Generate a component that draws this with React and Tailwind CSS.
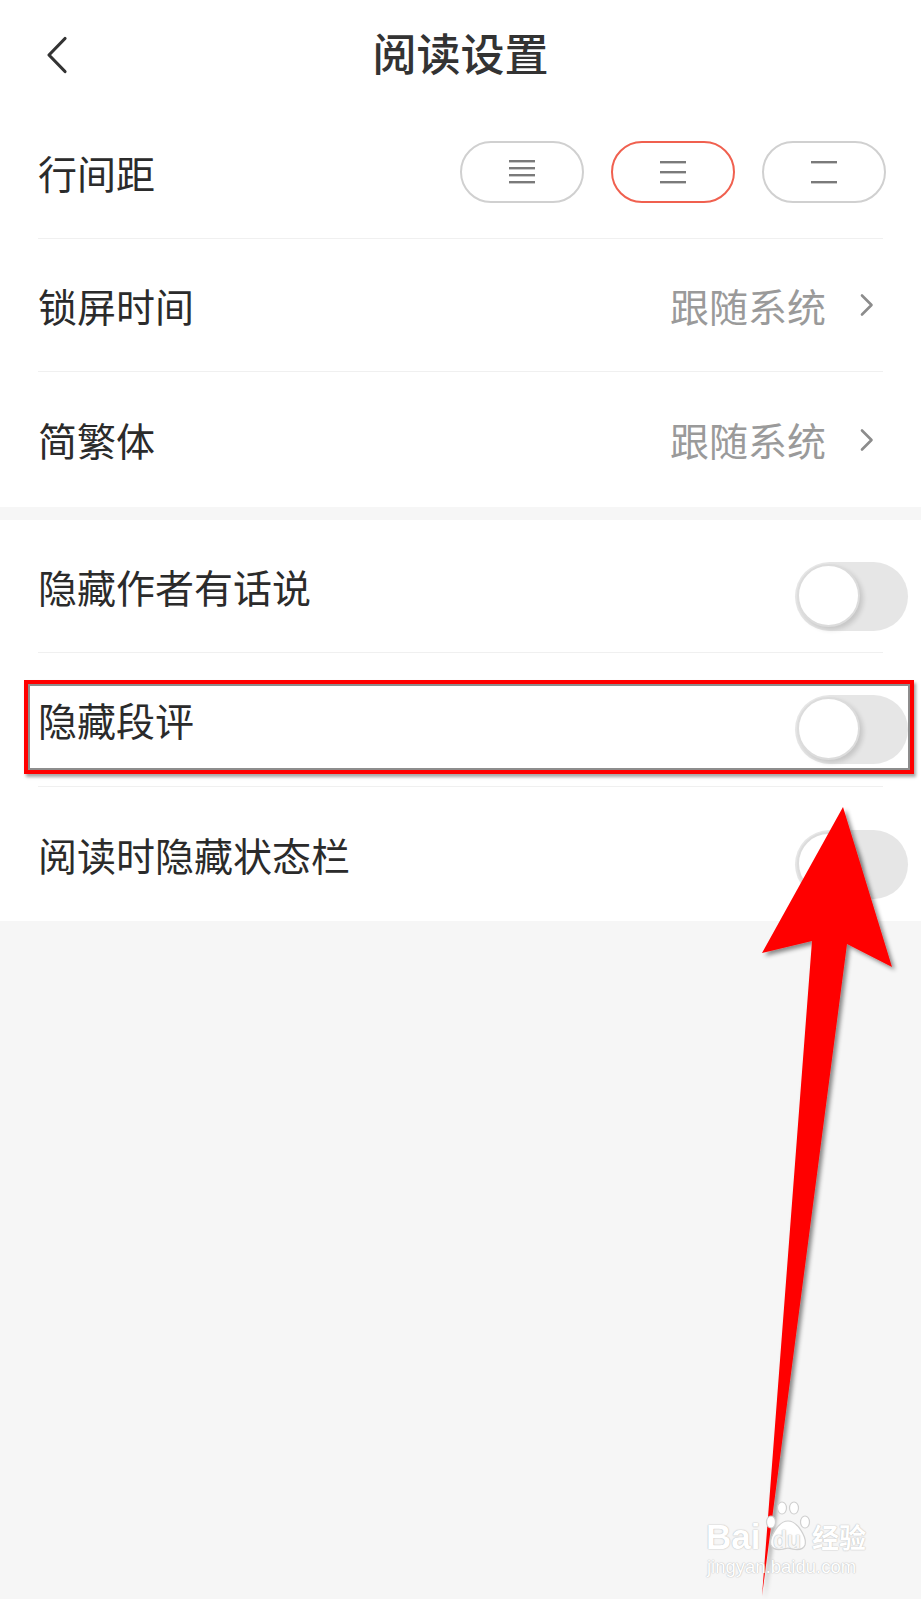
import React from "react";

function LinesIcon({ ys }) {
  return (
    <svg width="26" height="24" viewBox="0 0 26 24" className="block">
      {ys.map((y) => (
        <rect key={y} x="0" y={y} width="26" height="2.4" fill="#7a7a7a" />
      ))}
    </svg>
  );
}

function SpacingButton({ ys, active }) {
  return (
    <div
      className={
        active
          ? "w-[124px] h-[62px] rounded-full border-2 border-[#f0604f] flex items-center justify-center bg-white"
          : "w-[124px] h-[62px] rounded-full border-2 border-[#d0d0d0] flex items-center justify-center bg-white"
      }
    >
      <LinesIcon ys={ys} />
    </div>
  );
}

function Chevron() {
  return (
    <svg width="16" height="24" viewBox="0 0 16 24" className="block">
      <path d="M3 2.5 L12.5 12 L3 21.5" fill="none" stroke="#8c8c8c" strokeWidth="2.6" strokeLinecap="round" strokeLinejoin="round" />
    </svg>
  );
}

function Toggle() {
  return (
    <div className="relative w-[113px] h-[69px] rounded-full bg-[#e6e6e6] mt-[20px] -mr-[25px] shrink-0">
      <div className="absolute left-[2px] top-[2px] w-[63px] h-[63px] rounded-full bg-white border-2 border-[#dcdcdc] shadow-[3px_3px_5px_rgba(0,0,0,0.14)]" />
    </div>
  );
}

function Row({ h, border, children }) {
  return (
    <div
      className={
        border
          ? "mx-[38px] flex items-center justify-between border-b border-[#f0f0f0] " + h
          : "mx-[38px] flex items-center justify-between " + h
      }
    >
      {children}
    </div>
  );
}

function ValueRight() {
  return (
    <div className="flex items-center gap-[33px] mr-[8px]">
      <span className="text-[39px] leading-none text-[#9a9a9a]">跟随系统</span>
      <Chevron />
    </div>
  );
}

export default function App() {
  const font = "font-['Noto_Sans_CJK_SC','Noto_Sans',sans-serif]";
  const wm = "[text-shadow:0_0_1.5px_#b8b8b8,0_0_1px_#cccccc]";
  return (
    <div className={"relative w-full min-h-[1599px] bg-[#f6f6f6] overflow-hidden " + font}>
      {/* top white block */}
      <div className="bg-white">
        <div className="relative h-[106px] flex items-center justify-center">
          <div className="absolute left-[45px] top-[36px]">
            <svg width="24" height="38" viewBox="0 0 24 38" className="block">
              <path d="M20 2.5 L4 19 L20 35.5" fill="none" stroke="#333333" strokeWidth="3.2" strokeLinecap="round" strokeLinejoin="round" />
            </svg>
          </div>
          <span className="text-[44px] leading-none font-medium text-[#333333] -mt-[2px]">阅读设置</span>
        </div>

        <Row h="h-[133px]" border>
          <span className="text-[39px] leading-none text-[#2b2b2b]">行间距</span>
          <div className="flex items-center gap-[27px] -mr-[3px]">
            <SpacingButton ys={[0, 7, 14, 21]} />
            <SpacingButton ys={[1, 11, 21]} active />
            <SpacingButton ys={[1, 21]} />
          </div>
        </Row>

        <Row h="h-[133px]" border>
          <span className="text-[39px] leading-none text-[#2b2b2b]">锁屏时间</span>
          <ValueRight />
        </Row>

        <Row h="h-[135px]">
          <span className="text-[39px] leading-none text-[#2b2b2b]">简繁体</span>
          <ValueRight />
        </Row>
      </div>

      <div className="h-[13px]" />

      {/* second white block */}
      <div className="bg-white">
        <Row h="h-[133px]" border>
          <span className="text-[39px] leading-none text-[#2b2b2b]">隐藏作者有话说</span>
          <Toggle />
        </Row>
        <Row h="h-[134px]" border>
          <span className="text-[39px] leading-none text-[#2b2b2b]">隐藏段评</span>
          <Toggle />
        </Row>
        <Row h="h-[134px]">
          <span className="text-[39px] leading-none text-[#2b2b2b]">阅读时隐藏状态栏</span>
          <Toggle />
        </Row>
      </div>

      {/* red highlight box */}
      <div className="absolute left-[24px] top-[680px] w-[890px] h-[94px] border-4 border-[#ff0000] shadow-[inset_0_0_0_2px_#8d8d8d,2px_3px_3px_rgba(0,0,0,0.35)]" />

      {/* red arrow */}
      <svg className="absolute left-0 top-0" width="921" height="1599" viewBox="0 0 921 1599">
        <defs>
          <filter id="ash" x="-20%" y="-5%" width="140%" height="110%">
            <feDropShadow dx="3" dy="3" stdDeviation="2" floodColor="#000" floodOpacity="0.45" />
          </filter>
        </defs>
        <polygon
          points="843,807 892,967 847,944 762,1596 812,941 762,953"
          fill="#ff0000"
          filter="url(#ash)"
        />
      </svg>

      {/* baidu watermark */}
      <div className="absolute left-[700px] top-[1498px] w-[180px] h-[84px]">
        <svg className="absolute left-[64px] top-[2px]" width="48" height="52" viewBox="0 0 48 52">
          <g fill="#ffffff" stroke="#d0d0d0" strokeWidth="1.2">
            <ellipse cx="7" cy="22" rx="4.5" ry="6" />
            <ellipse cx="18" cy="8" rx="4.5" ry="6" />
            <ellipse cx="30" cy="8" rx="4.5" ry="6" />
            <ellipse cx="41" cy="22" rx="4.5" ry="6" />
            <path d="M24 21 C14 21 5 38 7 45 C9 51 17 50 24 48 C31 50 39 51 41 45 C43 38 34 21 24 21 Z" />
          </g>
        </svg>
        <span className={"absolute left-[6px] top-[22px] font-['Liberation_Sans',sans-serif] font-bold text-[35px] leading-[34px] text-white " + wm}>Bai</span>
        <span className={"absolute left-[73px] top-[31px] font-['Liberation_Sans',sans-serif] font-bold text-[23px] leading-none text-[#f6f6f6] " + wm}>du</span>
        <span className={"absolute left-[112px] top-[25px] text-[27px] leading-none font-bold text-white " + wm}>经验</span>
        <span className={"absolute left-[7px] top-[60px] font-['Liberation_Sans',sans-serif] text-[18.5px] leading-none text-white " + wm}>
          jingyan.baidu.com
        </span>
      </div>
    </div>
  );
}
